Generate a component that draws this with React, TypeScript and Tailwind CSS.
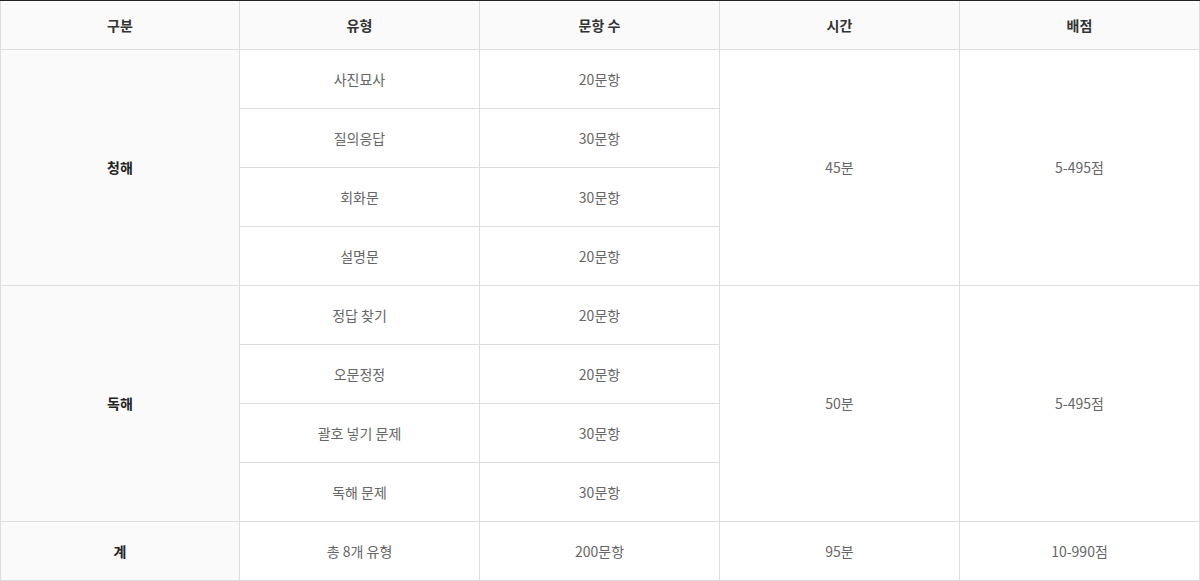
const font = { fontFamily: '"Noto Sans CJK KR", "Noto Sans", sans-serif' };

const listening = [
  ["사진묘사", "20문항"],
  ["질의응답", "30문항"],
  ["회화문", "30문항"],
  ["설명문", "20문항"],
];

const reading = [
  ["정답 찾기", "20문항"],
  ["오문정정", "20문항"],
  ["괄호 넣기 문제", "30문항"],
  ["독해 문제", "30문항"],
];

const head = ["구분", "유형", "문항 수", "시간", "배점"];

function Cell({ children, className = "" }: { children?: React.ReactNode; className?: string }) {
  return (
    <div className={`flex items-center justify-center text-[14px] ${className}`}>{children}</div>
  );
}

function Section({ label, rows, time, score }: { label: string; rows: string[][]; time: string; score: string }) {
  return (
    <>
      <Cell className="row-span-4 bg-[#fafafa] font-bold text-[#222]">{label}</Cell>
      {rows.map((r, i) => (
        <div key={r[0]} className="contents">
          <Cell className="col-start-2 bg-white text-[#666]">{r[0]}</Cell>
          <Cell className="col-start-3 bg-white text-[#666]">{r[1]}</Cell>
          {i === 0 && (
            <>
              <Cell className="col-start-4 row-span-4 bg-white text-[#666]">{time}</Cell>
              <Cell className="col-start-5 row-span-4 bg-white text-[#666]">{score}</Cell>
            </>
          )}
        </div>
      ))}
    </>
  );
}

export default function App() {
  return (
    <div className="w-[1200px] h-[581px] bg-white" style={font}>
      <div className="grid grid-cols-[238px_repeat(4,239px)] grid-rows-[48px_repeat(9,58px)] gap-px bg-[#dddddd] border-t border-[#222] px-px pb-px">
        {head.map((h) => (
          <Cell key={h} className="bg-[#fafafa] font-bold text-[#333]">
            {h}
          </Cell>
        ))}
        <Section label="청해" rows={listening} time="45분" score="5-495점" />
        <Section label="독해" rows={reading} time="50분" score="5-495점" />
        <Cell className="bg-[#fafafa] font-bold text-[#222]">계</Cell>
        <Cell className="bg-white text-[#666]">총 8개 유형</Cell>
        <Cell className="bg-white text-[#666]">200문항</Cell>
        <Cell className="bg-white text-[#666]">95분</Cell>
        <Cell className="bg-white text-[#666]">10-990점</Cell>
      </div>
    </div>
  );
}
